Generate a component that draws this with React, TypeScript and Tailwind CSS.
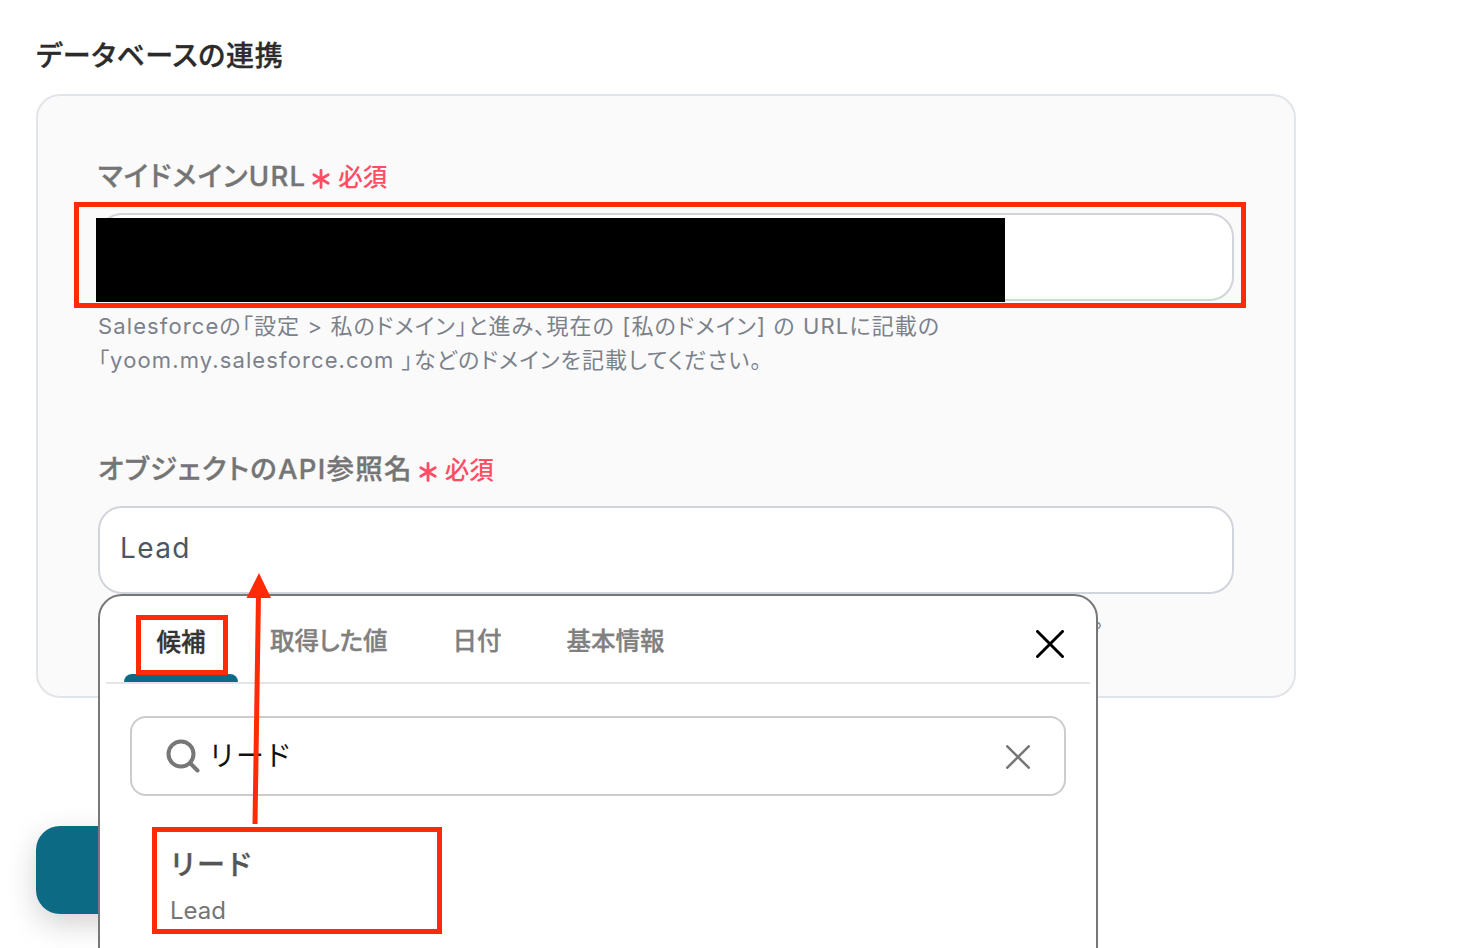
function Required() {
  return (
    <span className="flex items-center gap-[7px]">
      <svg width="20" height="20" viewBox="0 0 20 20" className="mt-[6px]" fill="none" stroke="#ff4d64" strokeWidth="2.8" strokeLinecap="round">
        <path d="M10 1.5v17M2.8 5.800l14.400 8.400M17.200 5.800 2.800 14.200" />
      </svg>
      <span className="mt-[2px] text-[24.5px] font-medium text-[#ff4d64]">必須</span>
    </span>
  );
}

function FieldLabel({ text }: { text: string }) {
  return (
    <div className="flex items-center gap-[5px] h-[40px]">
      <span className="mt-[2px] text-[27.5px] tracking-[1.25px] font-medium [-webkit-text-stroke:0.35px_#757575] text-[#757575]">{text}</span>
      <Required />
    </div>
  );
}

function CloseIcon({ size, color, width }: { size: number; color: string; width: number }) {
  return (
    <svg width={size} height={size} viewBox="0 0 28 28" fill="none" stroke={color} strokeWidth={width} strokeLinecap="round">
      <path d="M1.5 1.5l25 25M26.5 1.5l-25 25" />
    </svg>
  );
}

function SuggestPopup() {
  return (
    <div className="absolute left-[98px] top-[594px] w-[1000px] h-[420px] bg-white border-2 border-[#777777] rounded-[24px] px-[6px]">
      <div className="relative flex items-center h-[88px] border-b-2 border-[#e5e5e5]">
        <div className="relative flex justify-center w-[114px] ml-[18px] h-full pt-[28px] text-[24.5px] font-medium [-webkit-text-stroke:0.35px_#333333] text-[#333333]">
          候補
          <div className="absolute bottom-0 left-0 right-0 h-[8px] bg-[#0c6a85] rounded-t-[8px]" />
        </div>
        <div className="flex gap-[65px] ml-[32px] mt-[5px] text-[24.5px] font-medium [-webkit-text-stroke:0.35px_#808080] text-[#808080]">
          <span>取得した値</span>
          <span>日付</span>
          <span>基本情報</span>
        </div>
        <div className="absolute right-[26px] top-[34px]">
          <CloseIcon size={28} color="#000000" width={3} />
        </div>
      </div>
      <div className="flex items-center h-[80px] mt-[32px] ml-[24px] w-[936px] border-2 border-[#cccccc] rounded-[16px] pl-[34px] pr-[34px]">
        <svg width="34" height="34" viewBox="0 0 34 34" fill="none" stroke="#777777" strokeWidth="4" strokeLinecap="round">
          <circle cx="15" cy="15" r="12.5" />
          <path d="M24.500 24.500l7 7" />
        </svg>
        <span className="ml-[8px] text-[28px] text-[#111111] [font-feature-settings:normal]">リード</span>
        <span className="ml-auto mt-[2px]">
          <CloseIcon size={24} color="#777777" width={3} />
        </span>
      </div>
      <div className="ml-[64px] mt-[47px]">
        <div className="-ml-[1px] text-[28px] leading-[44px] font-medium [-webkit-text-stroke:0.35px_#555555] text-[#555555] [font-feature-settings:normal]">リード</div>
        <div className="mt-[6px] text-[24px] leading-[36px] text-[#757575]">Lead</div>
      </div>
    </div>
  );
}

export default function App() {
  return (
    <div className="relative h-[948px] w-[1466px] overflow-hidden bg-white font-['Inter','Noto_Sans_CJK_JP',sans-serif] [font-feature-settings:'palt']">
      <div className="pl-[36px] pt-[37px]">
        <h2 className="text-[28px] leading-[38px] tracking-[0.7px] font-medium [-webkit-text-stroke:0.35px_#2b2b2b] text-[#2b2b2b]">データベースの連携</h2>

        <div className="mt-[19px] w-[1260px] h-[604px] bg-[#fafafa] border-2 border-[#e1e4e8] rounded-[24px] pl-[60px] pr-[60px] pt-[60px]">
          <FieldLabel text="マイドメインURL" />
          <div className="relative mt-[17px] h-[88px] w-[1136px] bg-white border-2 border-[#d1d5db] rounded-[24px]">
            <div className="absolute left-[-4px] top-[3px] w-[909px] h-[84px] bg-black" />
          </div>
          <p className="mt-[8px] text-[22px] leading-[34px] tracking-[1.12px] text-[#7b818a]">
            Salesforceの「設定 &gt; 私のドメイン」と進み、現在の [私のドメイン] の URLに記載の
            <br />
            「yoom.my.salesforce.com 」などのドメインを記載してください。
          </p>

          <div className="mt-[72px]">
            <FieldLabel text="オブジェクトのAPI参照名" />
          </div>
          <div className="mt-[17px] flex items-center h-[88px] w-[1136px] bg-white border-2 border-[#d1d5db] rounded-[24px] pl-[20px] pb-[4px]">
            <span className="text-[28px] tracking-[0.05em] text-[#4b5563]">Lead</span>
          </div>
          <p className="mt-[8px] w-[1017px] text-right text-[22px] leading-[34px] text-[#7b818a] [font-feature-settings:normal]">
            ください。
          </p>
        </div>

        <div className="mt-[128px] w-[280px] h-[88px] rounded-[24px] bg-[#0c6a85] shadow-[0_10px_30px_rgba(0,0,0,0.18)]" />
      </div>

      <SuggestPopup />

      {/* annotations drawn on top of the screenshot */}
      <div className="absolute left-[74px] top-[202px] w-[1172px] h-[106px] border-[5px] border-[#ff2a06]" />
      <div className="absolute left-[136px] top-[615px] w-[92px] h-[60px] border-[5px] border-[#ff2a06]" />
      <div className="absolute left-[152px] top-[827px] w-[290px] h-[107px] border-[5px] border-[#ff2a06]" />
      <svg className="absolute left-[240px] top-[570px]" width="40" height="260" viewBox="0 0 40 260" fill="none">
        <path d="M15 254 18.500 24" stroke="#ff2a06" strokeWidth="5" />
        <path d="M19 3 31 28H6.500Z" fill="#ff2a06" />
      </svg>
    </div>
  );
}
